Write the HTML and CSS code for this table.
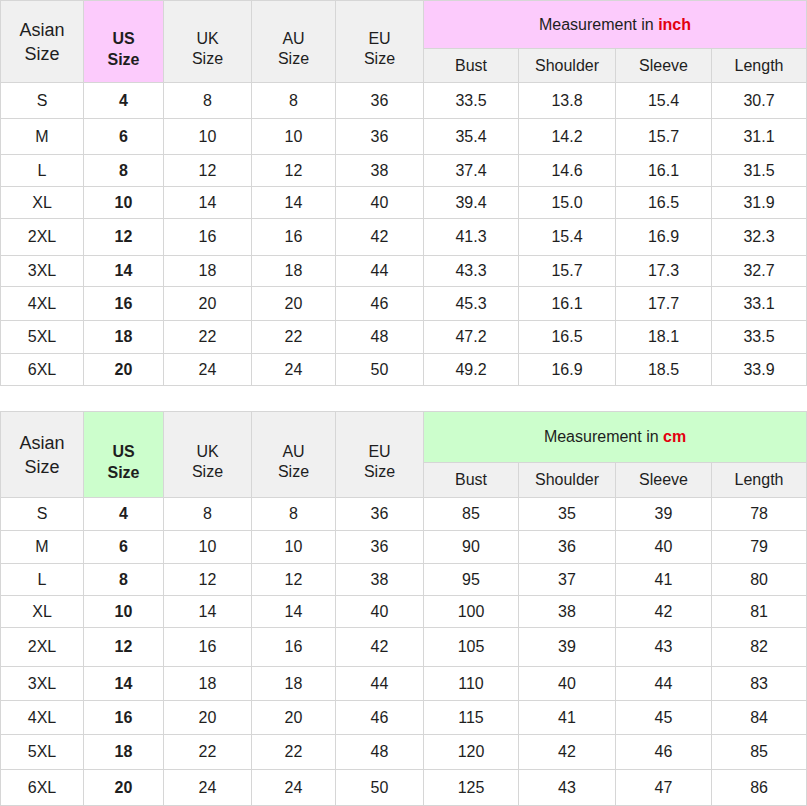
FILE: index.html
```html
<!DOCTYPE html>
<html>
<head>
<meta charset="utf-8">
<link rel="stylesheet" href="styles.css">
</head>
<body>
<table class="chart">
  <colgroup>
    <col class="c-asian"><col class="c-us"><col class="c-uk"><col class="c-au"><col class="c-eu">
    <col class="c-bust"><col class="c-shoulder"><col class="c-sleeve"><col class="c-length">
  </colgroup>
  <tr class="h48">
    <th rowspan="2" class="hd asian">Asian<br>Size</th>
    <th rowspan="2" class="hd us pink">US<br>Size</th>
    <th rowspan="2" class="hd reg">UK<br>Size</th>
    <th rowspan="2" class="hd reg">AU<br>Size</th>
    <th rowspan="2" class="hd reg">EU<br>Size</th>
    <th colspan="4" class="meas pink">Measurement in <b class="unit">inch</b></th>
  </tr>
  <tr class="h34">
    <th class="sub">Bust</th><th class="sub">Shoulder</th><th class="sub">Sleeve</th><th class="sub">Length</th>
  </tr>
  <tr class="h36"><td>S</td><td class="b">4</td><td>8</td><td>8</td><td>36</td><td>33.5</td><td>13.8</td><td>15.4</td><td>30.7</td></tr>
  <tr class="h36"><td>M</td><td class="b">6</td><td>10</td><td>10</td><td>36</td><td>35.4</td><td>14.2</td><td>15.7</td><td>31.1</td></tr>
  <tr class="h32"><td>L</td><td class="b">8</td><td>12</td><td>12</td><td>38</td><td>37.4</td><td>14.6</td><td>16.1</td><td>31.5</td></tr>
  <tr class="h32"><td>XL</td><td class="b">10</td><td>14</td><td>14</td><td>40</td><td>39.4</td><td>15.0</td><td>16.5</td><td>31.9</td></tr>
  <tr class="h37"><td>2XL</td><td class="b">12</td><td>16</td><td>16</td><td>42</td><td>41.3</td><td>15.4</td><td>16.9</td><td>32.3</td></tr>
  <tr class="h31"><td>3XL</td><td class="b">14</td><td>18</td><td>18</td><td>44</td><td>43.3</td><td>15.7</td><td>17.3</td><td>32.7</td></tr>
  <tr class="h34"><td>4XL</td><td class="b">16</td><td>20</td><td>20</td><td>46</td><td>45.3</td><td>16.1</td><td>17.7</td><td>33.1</td></tr>
  <tr class="h33"><td>5XL</td><td class="b">18</td><td>22</td><td>22</td><td>48</td><td>47.2</td><td>16.5</td><td>18.1</td><td>33.5</td></tr>
  <tr class="h32"><td>6XL</td><td class="b">20</td><td>24</td><td>24</td><td>50</td><td>49.2</td><td>16.9</td><td>18.5</td><td>33.9</td></tr>
</table>

<table class="chart second">
  <colgroup>
    <col class="c-asian"><col class="c-us"><col class="c-uk"><col class="c-au"><col class="c-eu">
    <col class="c-bust"><col class="c-shoulder"><col class="c-sleeve"><col class="c-length">
  </colgroup>
  <tr class="h51">
    <th rowspan="2" class="hd asian">Asian<br>Size</th>
    <th rowspan="2" class="hd us green">US<br>Size</th>
    <th rowspan="2" class="hd reg">UK<br>Size</th>
    <th rowspan="2" class="hd reg">AU<br>Size</th>
    <th rowspan="2" class="hd reg">EU<br>Size</th>
    <th colspan="4" class="meas green">Measurement in <b class="unit">cm</b></th>
  </tr>
  <tr class="h35">
    <th class="sub">Bust</th><th class="sub">Shoulder</th><th class="sub">Sleeve</th><th class="sub">Length</th>
  </tr>
  <tr class="h33"><td>S</td><td class="b">4</td><td>8</td><td>8</td><td>36</td><td>85</td><td>35</td><td>39</td><td>78</td></tr>
  <tr class="h33"><td>M</td><td class="b">6</td><td>10</td><td>10</td><td>36</td><td>90</td><td>36</td><td>40</td><td>79</td></tr>
  <tr class="h32"><td>L</td><td class="b">8</td><td>12</td><td>12</td><td>38</td><td>95</td><td>37</td><td>41</td><td>80</td></tr>
  <tr class="h32"><td>XL</td><td class="b">10</td><td>14</td><td>14</td><td>40</td><td>100</td><td>38</td><td>42</td><td>81</td></tr>
  <tr class="h39"><td>2XL</td><td class="b">12</td><td>16</td><td>16</td><td>42</td><td>105</td><td>39</td><td>43</td><td>82</td></tr>
  <tr class="h34"><td>3XL</td><td class="b">14</td><td>18</td><td>18</td><td>44</td><td>110</td><td>40</td><td>44</td><td>83</td></tr>
  <tr class="h34"><td>4XL</td><td class="b">16</td><td>20</td><td>20</td><td>46</td><td>115</td><td>41</td><td>45</td><td>84</td></tr>
  <tr class="h35"><td>5XL</td><td class="b">18</td><td>22</td><td>22</td><td>48</td><td>120</td><td>42</td><td>46</td><td>85</td></tr>
  <tr class="h36"><td>6XL</td><td class="b">20</td><td>24</td><td>24</td><td>50</td><td>125</td><td>43</td><td>47</td><td>86</td></tr>
</table>
</body>
</html>
```

FILE: styles.css
```css
html, body {
  margin: 0;
  padding: 0;
  background: #ffffff;
}

body {
  font-family: "Liberation Sans", Arial, sans-serif;
  color: #1e1e1e;
}

.chart {
  width: 807px;
  table-layout: fixed;
  border-collapse: separate;
  border-spacing: 0;
  border-top: 1px solid #d6d6d6;
  border-left: 1px solid #d6d6d6;
}

.second {
  margin-top: 25px;
}

.c-asian { width: 83px; }
.c-us { width: 80px; }
.c-uk { width: 88px; }
.c-au { width: 84px; }
.c-eu { width: 88px; }
.c-bust { width: 95px; }
.c-shoulder { width: 97px; }
.c-sleeve { width: 96px; }
.c-length { width: 95px; }

.chart th,
.chart td {
  border-right: 1px solid #d6d6d6;
  border-bottom: 1px solid #d6d6d6;
  padding: 0;
  text-align: center;
  vertical-align: middle;
  font-size: 16px;
  line-height: 20px;
  font-weight: normal;
  box-sizing: border-box;
}

.chart th {
  background: #f0f0f0;
}

.chart th.pink { background: #fccbfc; }
.chart th.green { background: #ccfecc; }

.chart th.asian {
  font-size: 18px;
  line-height: 24px;
}

.chart th.us {
  font-weight: bold;
  padding-top: 14px;
  line-height: 21px;
}

.chart th.reg {
  padding-top: 14px;
}

.unit {
  color: #e3000f;
  font-weight: bold;
}

.chart td.b {
  font-weight: bold;
}

.h31 { height: 31px; }
.h32 { height: 32px; }
.h33 { height: 33px; }
.h34 { height: 34px; }
.h35 { height: 35px; }
.h36 { height: 36px; }
.h37 { height: 37px; }
.h39 { height: 39px; }
.h48 { height: 48px; }
.h51 { height: 51px; }
```
